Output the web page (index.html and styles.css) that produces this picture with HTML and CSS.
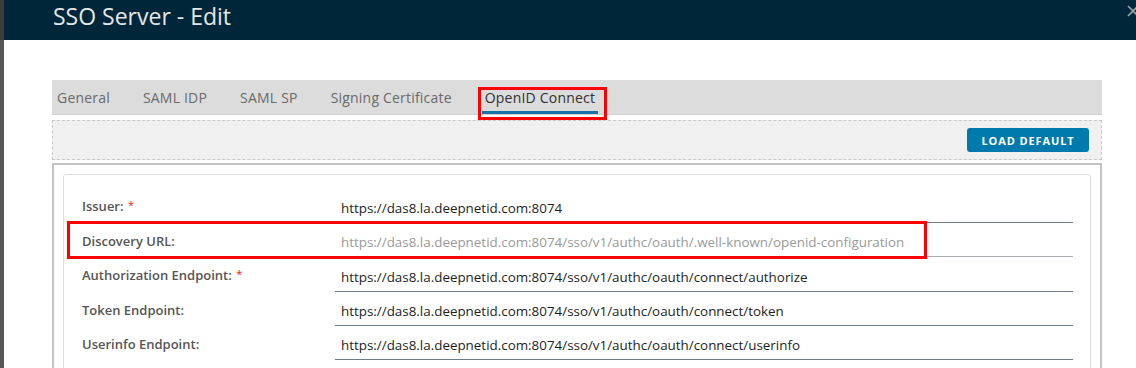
FILE: index.html
```html
<!DOCTYPE html>
<html lang="en">
<head>
    <meta charset="UTF-8">
    <meta name="viewport" content="width=device-width, initial-scale=1.0">
    <title>SSO Server - Edit</title>
    <link rel="stylesheet" href="styles.css">
</head>
<body>
    <div class="backdrop"></div>
    <div class="modal">
        <div class="modal-header">
            <h1>SSO Server - Edit</h1>
            <button class="close-btn" aria-label="Close">
                <svg width="12" height="12" viewBox="0 0 12 12">
                    <path d="M1 1 L11 11 M11 1 L1 11" stroke="#9aa3aa" stroke-width="1.6" fill="none"/>
                </svg>
            </button>
        </div>
        <div class="modal-body">
            <div class="tabs">
                <div class="tab">General</div>
                <div class="tab">SAML IDP</div>
                <div class="tab">SAML SP</div>
                <div class="tab">Signing Certificate</div>
                <div class="tab active">OpenID Connect<span class="mark mark-tab"></span></div>
            </div>
            <div class="toolbar">
                <button class="btn-primary">LOAD DEFAULT</button>
            </div>
            <div class="content">
                <div class="card">
                    <div class="row">
                        <label>Issuer: <span class="req">*</span></label>
                        <input type="text" value="https://das8.la.deepnetid.com:8074">
                    </div>
                    <div class="row">
                        <label>Discovery URL:</label>
                        <input type="text" class="muted" placeholder="https://das8.la.deepnetid.com:8074/sso/v1/authc/oauth/.well-known/openid-configuration">
                        <span class="mark mark-row"></span>
                    </div>
                    <div class="row">
                        <label>Authorization Endpoint: <span class="req">*</span></label>
                        <input type="text" value="https://das8.la.deepnetid.com:8074/sso/v1/authc/oauth/connect/authorize">
                    </div>
                    <div class="row">
                        <label>Token Endpoint:</label>
                        <input type="text" value="https://das8.la.deepnetid.com:8074/sso/v1/authc/oauth/connect/token">
                    </div>
                    <div class="row">
                        <label>Userinfo Endpoint:</label>
                        <input type="text" value="https://das8.la.deepnetid.com:8074/sso/v1/authc/oauth/connect/userinfo">
                    </div>
                </div>
            </div>
        </div>
    </div>
</body>
</html>
```

FILE: styles.css
```css
body {
    margin: 0;
    padding: 0;
    display: flex;
    height: 100vh;
    overflow: hidden;
    font-family: "Open Sans", "Liberation Sans", sans-serif;
    background-color: #ffffff;
}

.backdrop {
    width: 4px;
    flex-shrink: 0;
    background: linear-gradient(#3c3c3c 0, #3c3c3c 40px, #565656 40px);
}

.modal {
    flex: 1;
    display: flex;
    flex-direction: column;
    min-height: 0;
    background-color: #ffffff;
}

.modal-header {
    height: 40px;
    flex-shrink: 0;
    display: flex;
    align-items: flex-start;
    padding-left: 49px;
    background-color: #00263a;
    overflow: hidden;
}

.modal-header h1 {
    margin: 0;
    font-size: 23px;
    font-weight: 400;
    line-height: 32px;
    color: #e4e6e8;
}

.close-btn {
    margin-left: auto;
    margin-top: 5px;
    margin-right: -3px;
    padding: 0;
    border: none;
    background: none;
    width: 12px;
    height: 12px;
    display: flex;
}

.modal-body {
    flex: 1;
    min-height: 0;
    display: flex;
    flex-direction: column;
    padding: 40px 34px 0 48px;
    overflow: hidden;
}

.tabs {
    display: flex;
    flex-shrink: 0;
    gap: 27px;
    height: 35px;
    padding-left: 2px;
    background-color: #dcdcdc;
    border-bottom: 1px solid #cfcfcf;
    box-sizing: border-box;
}

.tab {
    position: relative;
    padding: 0 3px;
    font-size: 14px;
    letter-spacing: 0.2px;
    line-height: 35px;
    color: #6a6a6a;
}

.tab.active {
    color: #313131;
}

.tab.active::after {
    content: "";
    position: absolute;
    left: 0;
    right: 0;
    bottom: 0;
    height: 3px;
    background-color: #1a73a6;
}

/* red annotation boxes from the screenshot */
.mark {
    position: absolute;
    border: 3px solid #ff0000;
    pointer-events: none;
}

.mark-tab {
    left: -4px;
    right: -9px;
    top: 7px;
    bottom: -6px;
}

.toolbar {
    flex-shrink: 0;
    margin-top: 5px;
    height: 38px;
    display: flex;
    align-items: center;
    justify-content: flex-end;
    padding-right: 12px;
    background-color: #f0f0f0;
    border: 1px dashed #c8c8c8;
}

.btn-primary {
    height: 24px;
    width: 122px;
    border: none;
    border-radius: 3px;
    background-color: #0079ad;
    color: #ffffff;
    font-family: "Open Sans", "Liberation Sans", sans-serif;
    font-size: 11px;
    font-weight: 700;
    letter-spacing: 0.9px;
}

.content {
    flex: 1;
    min-height: 0;
    margin-top: 3px;
    border: 2px solid #c3c3c3;
    border-bottom: none;
    padding: 9px 9px 0 9px;
    overflow: hidden;
}

.card {
    border: 1px solid #dddddd;
    border-radius: 3px;
    padding: 21px 17px 20px 18px;
    display: flex;
    flex-direction: column;
    gap: 8px;
}

.row {
    position: relative;
    display: flex;
    align-items: flex-end;
}

.row label {
    width: 253px;
    flex-shrink: 0;
    font-size: 13px;
    font-weight: 600;
    color: #565656;
    line-height: 20px;
    padding-bottom: 6px;
}

.req {
    position: relative;
    top: -2px;
    margin-left: 1px;
    font-size: 11px;
    font-weight: 400;
    color: #e12200;
}

.row input {
    flex: 1;
    height: 26px;
    box-sizing: border-box;
    padding: 0 6px 4px 6px;
    border: none;
    border-bottom: 1px solid #6f7b84;
    background: transparent;
    font-family: "Open Sans", "Liberation Sans", sans-serif;
    font-size: 13.4px;
    color: #1e1e1e;
    outline: none;
}

.row input.muted {
    border-bottom-color: #a7acb0;
}

.row input::placeholder {
    color: #9a9a9a;
}

.mark-row {
    left: -15px;
    width: 860px;
    top: -10px;
    bottom: -2px;
    box-sizing: border-box;
}
```
